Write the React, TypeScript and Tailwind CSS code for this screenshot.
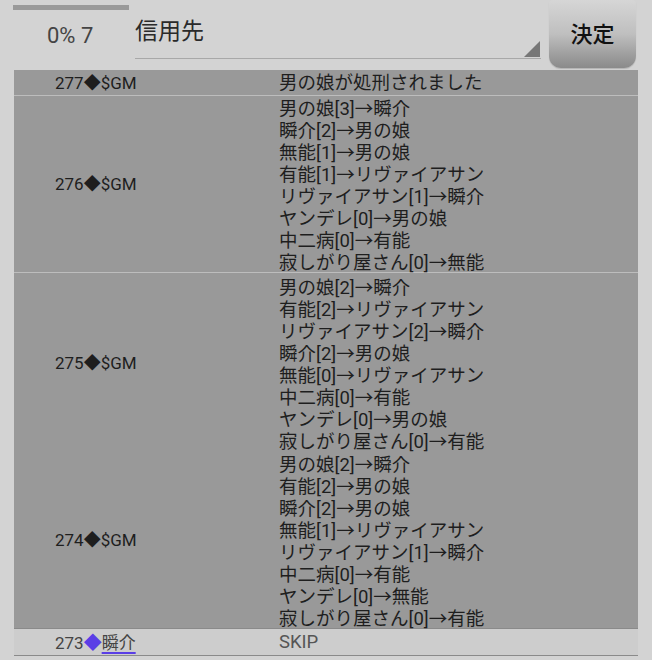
import React from "react";

type LogRow = {
  id: number;
  who: string;
  lines: string[];
  cls: string;
};

const rows: LogRow[] = [
  {
    id: 277,
    who: "$GM",
    cls: "h-[26px] pt-[2px] border-b border-[#bdbdbd]",
    lines: ["男の娘が処刑されました"],
  },
  {
    id: 276,
    who: "$GM",
    cls: "h-[177px] pt-[2px] border-b border-[#bdbdbd]",
    lines: [
      "男の娘[3]→瞬介",
      "瞬介[2]→男の娘",
      "無能[1]→男の娘",
      "有能[1]→リヴァイアサン",
      "リヴァイアサン[1]→瞬介",
      "ヤンデレ[0]→男の娘",
      "中二病[0]→有能",
      "寂しがり屋さん[0]→無能",
    ],
  },
  {
    id: 275,
    who: "$GM",
    cls: "h-[177px] pt-[4px]",
    lines: [
      "男の娘[2]→瞬介",
      "有能[2]→リヴァイアサン",
      "リヴァイアサン[2]→瞬介",
      "瞬介[2]→男の娘",
      "無能[0]→リヴァイアサン",
      "中二病[0]→有能",
      "ヤンデレ[0]→男の娘",
      "寂しがり屋さん[0]→有能",
    ],
  },
  {
    id: 274,
    who: "$GM",
    cls: "h-[178px] pt-[4px]",
    lines: [
      "男の娘[2]→瞬介",
      "有能[2]→男の娘",
      "瞬介[2]→男の娘",
      "無能[1]→リヴァイアサン",
      "リヴァイアサン[1]→瞬介",
      "中二病[0]→有能",
      "ヤンデレ[0]→無能",
      "寂しがり屋さん[0]→有能",
    ],
  },
];

export default function App() {
  return (
    <div
      className="w-[652px] h-[660px] overflow-hidden bg-[#d3d3d3] text-[#1e1e1e]"
      style={{ fontFamily: 'Roboto, "Noto Sans CJK JP", sans-serif' }}
    >
      {/* header */}
      <div className="flex h-[70px]">
        <div className="w-[135px] shrink-0 pl-[13px] pt-[5px]">
          <div className="h-[5px] w-[116px] bg-[#9a9a9a]" />
          <div className="pl-[34px] pt-[13px] text-[22px] leading-[26px] text-[#444]">0% 7</div>
        </div>
        <div className="relative w-[406px] shrink-0 border-b border-[#a8a8a8] h-[51px] mt-[8px]">
          <div className="pt-[10px] text-[23px] leading-[28px] text-[#2a2a2a]">信用先</div>
          <svg className="absolute right-[1px] bottom-[1px]" width="16" height="16" viewBox="0 0 16 16">
            <polygon points="16,0 16,16 0,16" fill="#777" />
          </svg>
        </div>
        <div className="ml-[8px] w-[87px] h-[68px] rounded-b-[12px] rounded-t-[4px] bg-gradient-to-b from-[#d6d6d6] via-[#bfbfbf] to-[#8a8a8a] flex items-center justify-center shadow-[0_1px_1px_rgba(0,0,0,0.15)]">
          <span className="text-[22px] font-medium text-[#111]">決定</span>
        </div>
      </div>

      {/* log table */}
      <div className="mx-[14px] w-[624px]">
        {rows.map((r) => (
          <div key={r.id} className={`flex bg-[#999999] ${r.cls}`}>
            <div className="w-[265px] shrink-0 flex items-center pl-[41px] text-[17px]">
              {r.id}◆{r.who}
            </div>
            <div className="flex flex-col text-[18.5px] leading-[22px]">
              {r.lines.map((l, i) => (
                <div key={i}>{l}</div>
              ))}
            </div>
          </div>
        ))}
        <div className="flex h-[28px] pt-[2px] items-center bg-[#cdcdcd] border-y border-[#8a8a8a] text-[17px]">
          <div className="w-[265px] shrink-0 pl-[41px] text-[#444]">
            273<span className="text-[#5a3ee6] text-[18px]">◆</span>
            <span className="underline decoration-[#5a3ee6] decoration-2 underline-offset-[3px]">瞬介</span>
          </div>
          <div className="text-[18.5px] text-[#555]">SKIP</div>
        </div>
      </div>
    </div>
  );
}
